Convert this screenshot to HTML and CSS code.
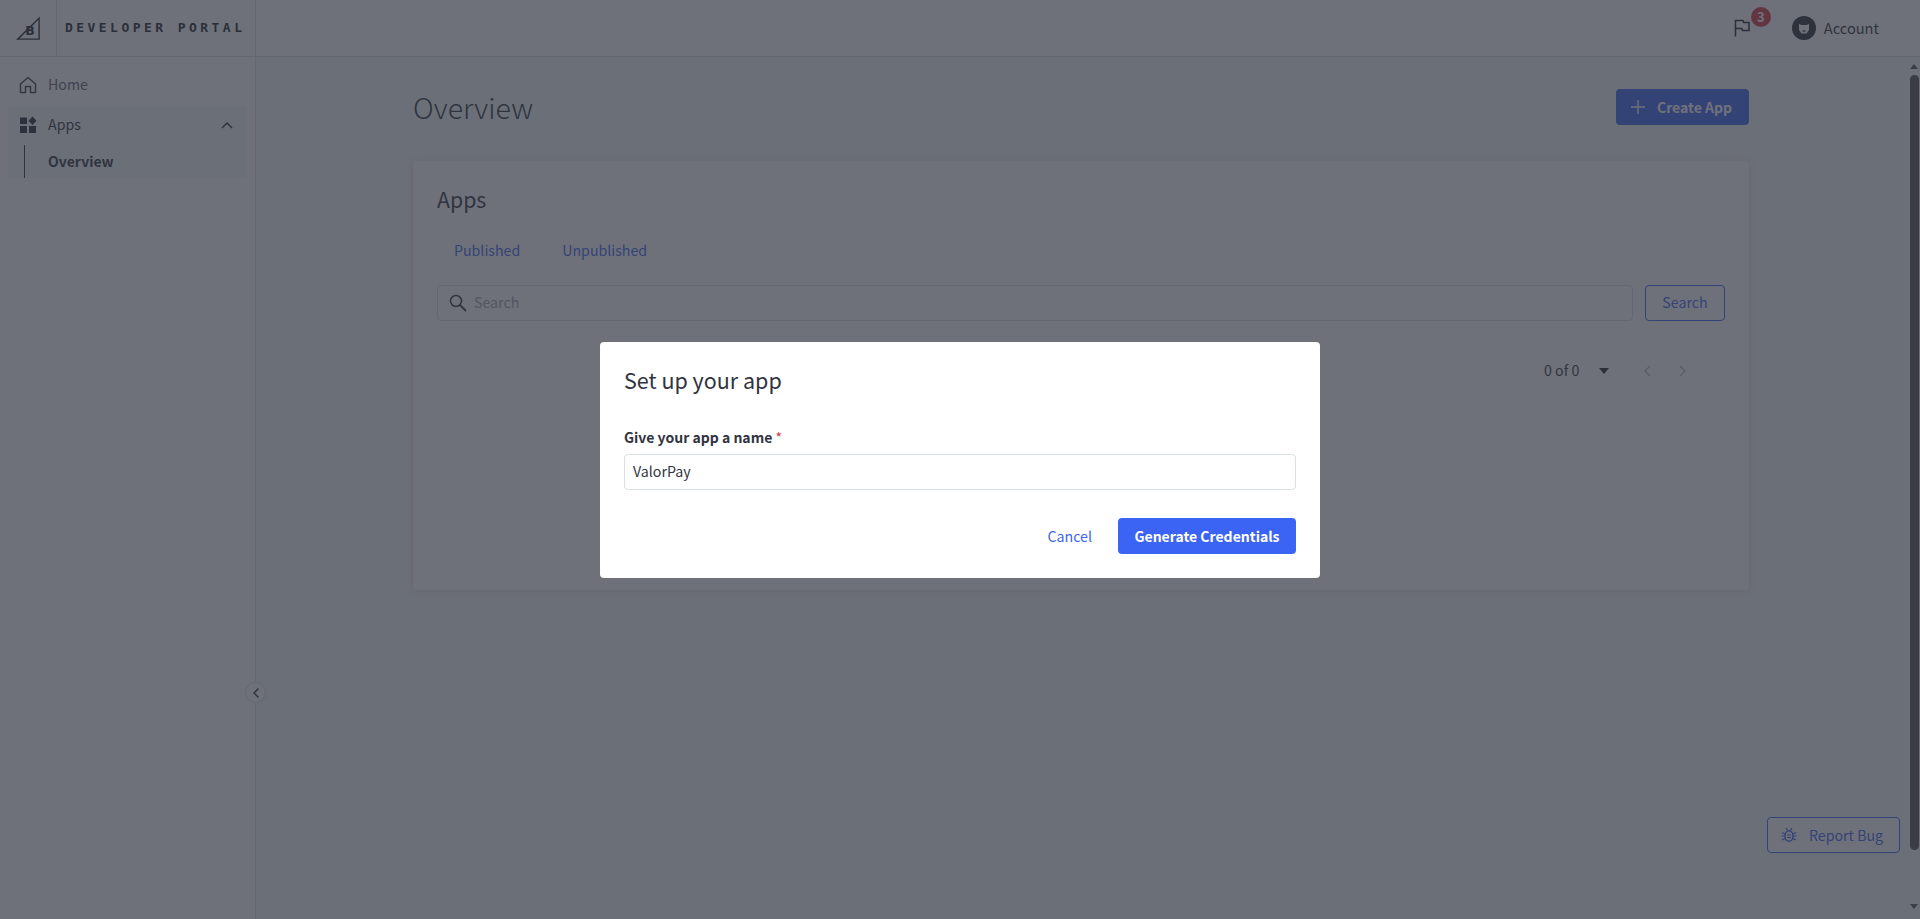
FILE: index.html
```html
<!DOCTYPE html>
<html lang="en">
<head>
<meta charset="utf-8">
<title>Developer Portal</title>
<link rel="stylesheet" href="styles.css">
</head>
<body>
<div class="app">
  <header class="topbar">
    <div class="logo-cell">
      <svg class="logo" viewBox="0 0 24 24" width="24" height="24"><path d="M0 23.800 L23.800 0.500 V23.800 Z M3.500 22.400 H22.400 V3.800 Z" fill="#20232d" fill-rule="evenodd"/><text x="9.300" y="19.300" class="logo-b">B</text></svg>
    </div>
    <div class="brand">DEVELOPER PORTAL</div>
    <div class="topbar-right">
      <div class="flag-wrap">
        <svg class="flag" viewBox="0 0 16 18" width="16" height="18"><path d="M1.500 17.500 V1.500 H9 L9.700 3.500 H15 V11.500 H8.500 L7.800 9.500 H1.500" fill="none" stroke="#1f2330" stroke-width="1.500"/></svg>
        <span class="badge">3</span>
      </div>
      <div class="account">
        <span class="avatar"><svg viewBox="0 0 24 24" width="24" height="24"><path d="M7 8 L9.500 9 H14.500 L17 8 V14 L14.500 17.500 H9.500 L7 14 Z" fill="#fff"/><path d="M10.500 15 H13.500" stroke="#272c38" stroke-width="1.300"/></svg></span>
        <span>Account</span>
      </div>
    </div>
  </header>
  <div class="body">
    <aside class="sidebar">
      <a class="nav-item">
        <svg viewBox="0 0 18 18" width="18" height="18"><path d="M1.500 8 L9 1.500 L16.500 8 V16.500 H11.500 V10.500 H6.500 V16.500 H1.500 Z" fill="none" stroke="#313440" stroke-width="1.400" stroke-linejoin="round"/></svg>
        <span class="nav-label">Home</span>
      </a>
      <div class="nav-group">
        <a class="nav-item nav-open">
          <svg viewBox="0 0 18 18" width="18" height="18"><path d="M1 1.500 H8 V8 H1 Z M1 10 H8 V17 H1 Z M10 10 H17 V17 H10 Z M13.500 0.500 L17.500 4.800 L13.500 9 L9.500 4.800 Z" fill="#272b38"/></svg>
          <span class="nav-label">Apps</span>
          <svg class="chev-up" viewBox="0 0 12 8" width="12" height="8"><path d="M1 7 L6 2 L11 7" fill="none" stroke="#313440" stroke-width="1.500"/></svg>
        </a>
        <a class="sub-item">Overview</a>
      </div>
    </aside>
    <main class="main">
      <div class="page-head">
        <h1>Overview</h1>
        <button class="btn btn-primary create">
          <svg viewBox="0 0 14 14" width="14" height="14"><path d="M7 0 V14 M0 7 H14" stroke="#fff" stroke-width="1.300"/></svg>
          Create App
        </button>
      </div>
      <section class="card">
        <h2>Apps</h2>
        <nav class="tabs"><a>Published</a><a>Unpublished</a></nav>
        <div class="search-row">
          <div class="search-box">
            <svg viewBox="0 0 18 18" width="18" height="18"><circle cx="7" cy="7" r="5.500" fill="none" stroke="#313440" stroke-width="1.500"/><path d="M11 11 L17 17" stroke="#313440" stroke-width="1.800"/></svg>
            <span class="lifted">Search</span>
          </div>
          <button class="btn btn-outline search-btn">Search</button>
        </div>
        <div class="pager">
          <span class="lifted">0 of 0</span>
          <i class="caret"></i>
          <svg class="pg-prev" viewBox="0 0 8 12" width="8" height="12"><path d="M7 1 L2 6 L7 11" fill="none" stroke="#b4b8c8" stroke-width="1.400"/></svg>
          <svg class="pg-next" viewBox="0 0 8 12" width="8" height="12"><path d="M1 1 L6 6 L1 11" fill="none" stroke="#b4b8c8" stroke-width="1.400"/></svg>
        </div>
      </section>
    </main>
    <div class="scrollbar">
      <i class="arrow-up"></i>
      <div class="thumb"></div>
      <i class="arrow-down"></i>
    </div>
  </div>
  <button class="collapse"><svg viewBox="0 0 8 12" width="8" height="12"><path d="M6.500 1.500 L2 6 L6.500 10.500" fill="none" stroke="#313440" stroke-width="1.500"/></svg></button>
  <button class="btn btn-outline report">
    <svg viewBox="0 0 16 16" width="16" height="16"><ellipse cx="8" cy="9" rx="4" ry="5.300" fill="none" stroke="#3c64f4" stroke-width="1.400"/><path d="M6 8 H10 M6 10.500 H10 M1 5.500 L4 7 M15 5.500 L12 7 M0.500 9 H4 M15.500 9 H12 M1 13 L4 11.500 M15 13 L12 11.500 M5 1 L6.500 3.500 M11 1 L9.500 3.500" stroke="#3c64f4" stroke-width="1.200" fill="none"/></svg>
    Report Bug
  </button>
</div>
<div class="overlay">
  <div class="modal">
    <h3>Set up your app</h3>
    <label class="field-label">Give your app a name <span class="req">*</span></label>
    <div class="field">ValorPay</div>
    <div class="modal-actions">
      <a class="cancel">Cancel</a>
      <button class="btn btn-primary generate">Generate Credentials</button>
    </div>
  </div>
</div>
</body>
</html>
```
FILE: styles.css
```css
* { box-sizing: border-box; }
html, body { margin: 0; height: 100%; overflow: hidden; }
body {
  font-family: "Noto Sans CJK SC", "Noto Sans", sans-serif;
  font-size: 14.2px;
  line-height: 24px;
  color: #313440;
  background: #fff;
}
h1, h2, h3 { margin: 0; font-weight: 400; }
button { font: inherit; cursor: pointer; }
svg { flex: none; }

.app { height: 919px; display: flex; flex-direction: column; position: relative; }

.topbar {
  height: 57px;
  flex: none;
  display: flex;
  align-items: center;
  background: #fff;
  border-bottom: 1px solid #d9dce9;
}
.logo-cell {
  width: 57px;
  height: 56px;
  display: flex;
  align-items: center;
  justify-content: center;
  border-right: 1px solid #d9dce9;
}
.logo-b { font-size: 12.500px; font-weight: 700; fill: #20232d; font-family: "DejaVu Sans", sans-serif; }
.brand {
  width: 199px;
  height: 56px;
  padding-left: 8px;
  border-right: 1px solid #d9dce9;
  font-family: "DejaVu Sans Mono", monospace;
  font-size: 13px;
  font-weight: 700;
  line-height: 56px;
  letter-spacing: 3.450px;
  color: #20232d;
  white-space: nowrap;
}
.topbar-right {
  margin-left: auto;
  display: flex;
  align-items: center;
  padding-right: 41px;
}
.flag-wrap { position: relative; width: 16px; height: 18px; margin-right: 42px; }
.flag { display: block; }
.badge {
  position: absolute;
  left: 17px;
  top: -12px;
  width: 20px;
  height: 20px;
  border-radius: 50%;
  background: #db3643;
  color: #fff;
  font-size: 13px;
  font-weight: 700;
  line-height: 20px;
  text-align: center;
}
.account { display: flex; align-items: center; gap: 8px; font-size: 14.600px; }
.avatar { width: 24px; height: 24px; border-radius: 50%; background: #272c38; display: block; }
.avatar svg { display: block; }

.body { flex: 1; min-height: 0; display: flex; }

.sidebar {
  width: 256px;
  flex: none;
  padding: 8px 8px 0;
  background: #fff;
  border-right: 1px solid #d9dce9;
}
.nav-item {
  height: 40px;
  display: flex;
  align-items: center;
  padding-left: 11px;
  gap: 11px;
  color: #5e637a;
}
.nav-label, .lifted { margin-top: -2px; }
.nav-group { margin-top: 1px; background: #f6f7fc; border-radius: 4px; height: 72px; }
.nav-open { color: #313440; height: 39px; padding-bottom: 2px; }
.chev-up { margin-left: auto; margin-right: 14px; }
.sub-item {
  display: block;
  margin-left: 16px;
  border-left: 1px solid #313440;
  height: 33px;
  padding-left: 23px;
  font-size: 14px;
  line-height: 32px;
  font-weight: 600;
  color: #313440;
}

.main { flex: 1; min-width: 0; background: #f6f7fc; padding: 32px 159px 0 157px; }
.page-head { height: 36px; display: flex; align-items: center; justify-content: space-between; margin-bottom: 36px; }
h1 { font-size: 28.500px; font-weight: 300; line-height: 36px; color: #313440; }

.btn { border-radius: 4px; height: 36px; padding: 0 16px; border: 1px solid transparent; line-height: 24px; }
.btn-primary { background: #3c64f4; color: #fff; font-weight: 600; font-size: 14px; }
.btn-outline { background: #fff; border-color: #3c64f4; color: #3c64f4; }
.create { display: flex; align-items: center; gap: 12px; width: 133px; padding: 0 14px; white-space: nowrap; }

.card {
  height: 429px;
  background: #fff;
  border-radius: 4px;
  box-shadow: 0 1px 6px rgba(49, 52, 64, .12);
  padding: 22px 24px;
}
h2 { font-size: 21.300px; line-height: 32px; color: #313440; }
.tabs { display: flex; gap: 42px; padding-left: 17px; margin-top: 23px; color: #3c64f4; height: 24px; }
.search-row { display: flex; gap: 12px; margin-top: 23px; }
.search-box {
  flex: 1;
  height: 36px;
  border: 1px solid #d9dce9;
  border-radius: 4px;
  display: flex;
  align-items: center;
  gap: 7px;
  padding-left: 11px;
  color: #a0a4b5;
}
.search-btn { width: 80px; padding: 0 0 2px; }
.pager {
  display: flex;
  align-items: center;
  height: 24px;
  margin-top: 38px;
  padding-left: 1107px;
  color: #313440;
}
.caret { width: 0; height: 0; border: 5px solid transparent; border-top: 6px solid #20232d; border-bottom: 0; margin-left: 20px; }
.pg-prev { margin-left: 34px; }
.pg-next { margin-left: 28px; }

.scrollbar { width: 12px; flex: none; position: relative; display: flex; flex-direction: column; align-items: center; background: #f6f7fc; padding-top: 7px; }
.arrow-up { width: 0; height: 0; border: 4px solid transparent; border-bottom: 5px solid #505050; border-top: 0; }
.arrow-down { width: 0; height: 0; border: 4px solid transparent; border-top: 5px solid #505050; border-bottom: 0; margin-top: 54px; }
.thumb { width: 9px; height: 775px; margin-top: 6px; background: #505050; border-radius: 5px; }

.collapse {
  position: absolute;
  left: 245px;
  top: 682px;
  width: 21px;
  height: 21px;
  padding: 0;
  border-radius: 50%;
  background: #fff;
  border: 1px solid #d9dce9;
  display: flex;
  align-items: center;
  justify-content: center;
}
.report {
  position: absolute;
  left: 1767px;
  top: 817px;
  width: 133px;
  height: 36px;
  display: flex;
  align-items: center;
  gap: 12px;
  padding: 0 13px;
  white-space: nowrap;
}

.overlay {
  position: fixed;
  inset: 0;
  background: rgba(49, 52, 64, .7);
}
.modal {
  position: absolute;
  left: 600px;
  top: 342px;
  width: 720px;
  height: 236px;
  background: #fff;
  border-radius: 4px;
  padding: 22px 24px;
}
h3 { font-size: 21.500px; line-height: 32px; color: #313440; }
.field-label { display: block; margin-top: 29px; font-size: 14px; font-weight: 600; line-height: 24px; }
.req { color: #db3643; font-size: 14px; font-weight: 400; }
.field {
  height: 36px;
  margin-top: 5px;
  border: 1px solid #d9dce9;
  border-radius: 4px;
  padding-left: 8px;
  line-height: 33px;
}
.modal-actions { display: flex; justify-content: flex-end; align-items: center; margin-top: 28px; }
.cancel { color: #3c64f4; margin-right: 26px; }
.generate { width: 178px; padding: 0; white-space: nowrap; }
```
